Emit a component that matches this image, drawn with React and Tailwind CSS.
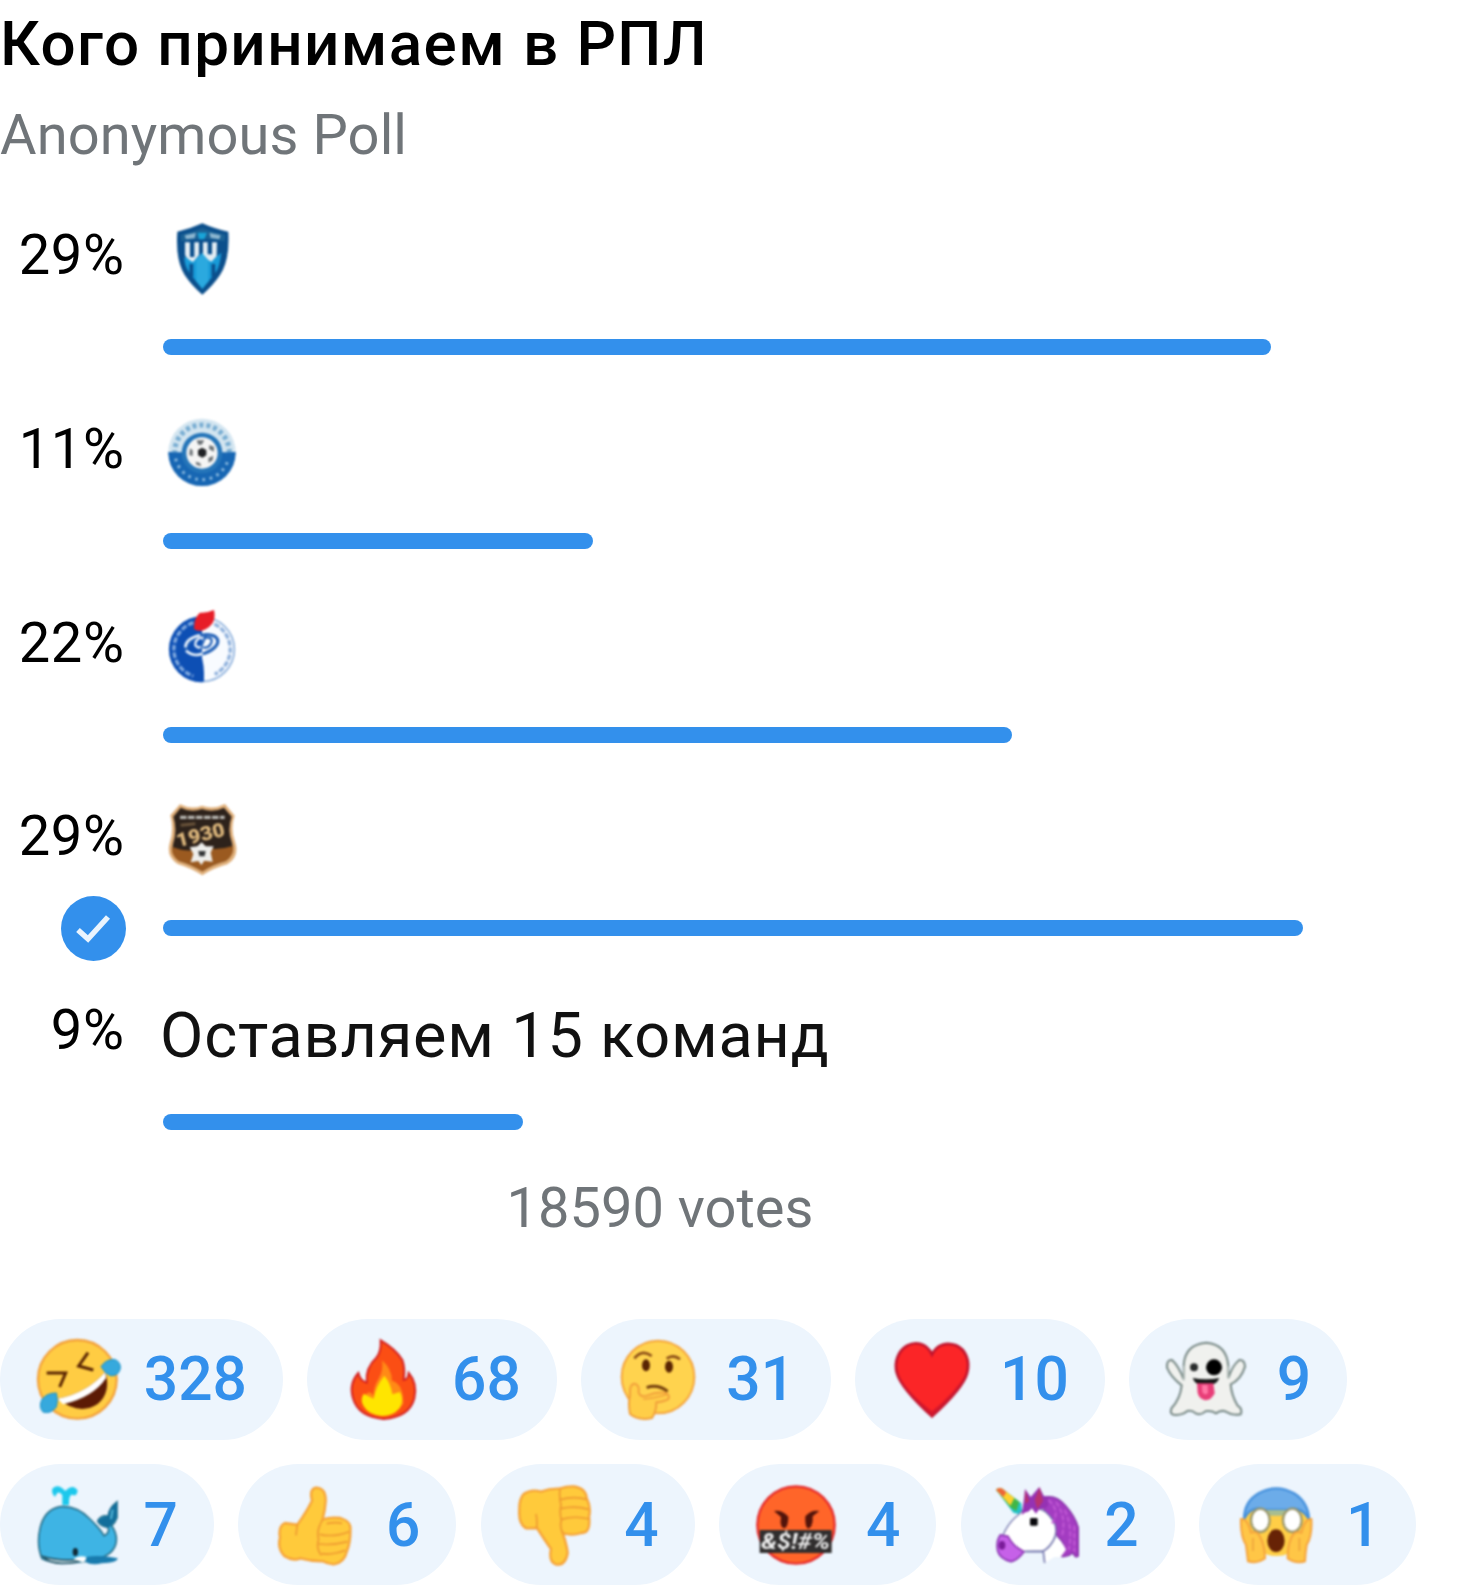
import React from 'react';

const BLUE = '#3390ec';

function Shield() {
  return (
    <g>
      <path d="M82 65 Q122 56 157 40 Q192 56 235 65 Q240 150 210 195 Q188 228 157 254 Q126 228 104 195 Q76 150 82 65Z" fill="#0b4f8c" />
      <path d="M92 74 Q125 68 157 54 Q190 68 226 74 L224 94 Q157 80 94 94Z" fill="#1b6194" />
      <path d="M104 76 L138 68 L134 85 L108 88Z M178 68 L212 76 L208 88 L182 84Z" fill="#8cb6d0" />
      <path d="M143 68 h28 l-8 20 h-16z" fill="#19a4d8" />
      <path d="M103 140 L130 152 L157 128 L184 152 L214 128 Q210 168 198 186 L157 238 L118 188 Q102 166 103 140Z" fill="#189bd8" />
      <path d="M124 162 V200 M190 162 V200" stroke="#0b4f8c" strokeWidth="11" />
      <path d="M105 97 h15 v44 h13 v-44 h14 v38 l-18 21 q-22 -12 -24 -22z" fill="#e3edf3" />
      <path d="M159 97 h14 v36 h13 v-36 h15 l-1 42 l-16 16 q-23 -10 -25 -22z" fill="#e3edf3" />
      <path d="M139 150 L157 130 L175 150 V214 L157 234 L139 214Z" fill="#2ba9df" />
    </g>
  );
}

function BallCrest() {
  return (
    <g>
      <circle cx="156" cy="141" r="101" fill="#d3e5f0" />
      <path d="M55 141 A101 101 0 0 0 257 141 Z" fill="#1766b3" />
      <circle cx="156" cy="141" r="82" fill="none" stroke="#78add2" strokeWidth="15" strokeDasharray="12 9" />
      <path d="M69 141 A87 87 0 0 0 243 141" fill="none" stroke="#1766b3" strokeWidth="27" />
      <path d="M77 160 A81 81 0 0 0 235 160" fill="none" stroke="#8dbbe0" strokeWidth="9" strokeDasharray="8 14" />
      <circle cx="156" cy="143" r="61" fill="#2575b9" />
      <circle cx="156" cy="143" r="47" fill="#f5f5f4" />
      <path d="M144 134 l12 -7 l13 7 v16 l-12 7 l-13 -7z" fill="#202225" />
      <path d="M140 105 h23 l-8 13 h-10z M178 119 l14 5 v15 l-15 -8z M175 158 l15 -7 l-2 14 l-12 7z M120 129 l8 6 v17 l-10 -3z M137 169 l13 4 l4 10 l-15 -5z" fill="#6d7377" />
    </g>
  );
}

function FlameCrest() {
  return (
    <g>
      <circle cx="156" cy="146" r="97" fill="#f8fbff" stroke="#8aaedb" strokeWidth="5" />
      <path d="M156 47 A99 99 0 0 0 156 245 Z" fill="#0d4fb4" />
      <path d="M130 66 A84 84 0 0 0 130 226" fill="none" stroke="#7fa8de" strokeWidth="10" strokeDasharray="17 6" />
      <path d="M193 70 A84 84 0 0 1 194 221" fill="none" stroke="#8fb1dc" strokeWidth="10" strokeDasharray="17 5" />
      <path d="M148 160 Q160 190 158 243" fill="none" stroke="#0d4fb4" strokeWidth="8" />
      <ellipse cx="156" cy="132" rx="49" ry="27" transform="rotate(-18 156 132)" fill="none" stroke="#2865b9" strokeWidth="10" />
      <path d="M106 140 Q108 112 150 104 M108 150 Q134 171 158 158" fill="none" stroke="#e8f1fb" strokeWidth="8" />
      <path d="M160 112 Q190 106 184 126 Q176 144 158 140 M168 104 L148 150" fill="none" stroke="#2865b9" strokeWidth="7" />
      <path d="M156 110 Q134 116 136 134 Q144 144 152 138" fill="none" stroke="#e8f1fb" strokeWidth="7" />
      <path d="M132 84 Q132 49 150 36 Q168 38 192 28 Q199 62 178 78 Q160 92 148 90 Q137 90 132 84Z" fill="#e71d27" />
    </g>
  );
}

function UralCrest() {
  return (
    <g>
      <path d="M90 28 Q124 45 156 32 Q190 45 225 27 L254 62 Q240 101 255 140 Q270 184 232 208 Q190 219 157 241 Q121 218 83 207 Q48 184 59 145 Q73 104 61 61Z" fill="#dfae78" />
      <path d="M92 38 Q124 54 156 42 Q190 54 222 38 L245 65 Q231 105 246 143 Q256 175 228 197 Q188 207 157 229 Q123 207 86 197 Q61 177 69 147 Q83 105 70 65Z" fill="#2d221b" />
      <path d="M68 156 Q120 177 157 157 Q204 168 248 153 Q254 180 228 197 Q188 207 157 229 Q123 207 86 197 Q60 179 68 156Z" fill="#9b5a20" />
      <path d="M90 67 H224" stroke="#b9b7b2" strokeWidth="10" strokeDasharray="20 4" />
      <text x="84" y="157" transform="rotate(-14 84 157)" fontSize="58" fontWeight="900" textLength="148" lengthAdjust="spacingAndGlyphs" fill="#ddb77c">
        1930
      </text>
      <path d="M92 91 L136 86" stroke="#69533a" strokeWidth="9" />
      <path d="M155 142 L167 154 L191 154 L182 173 L188 200 L163 197 L154 210 L145 198 L122 202 L130 177 L119 157 L142 154Z" fill="#eeeeeb" />
      <path d="M145 168 H167 L164 184 H148Z" fill="#343637" />
    </g>
  );
}

function Laugh() {
  return (
    <g>
      <circle cx="231" cy="209" r="118" fill="#ffcc43" stroke="#f3a13b" strokeWidth="7" />
      <path d="M139 190 L196 190 L178 232" fill="none" stroke="#5a2503" strokeWidth="9" />
      <path d="M263 129 L235 169 L279 181" fill="none" stroke="#5a2503" strokeWidth="9" />
      <path d="M172 267 Q260 250 315 186 Q333 248 292 283 Q237 319 172 267Z" fill="#5c1b05" />
      <path d="M172 267 Q260 250 315 186 L317 205 Q280 262 188 284Z" fill="#fff" />
      <path d="M302 171 Q315 150 341 149 Q361 155 360 176 Q355 200 330 198 Q316 193 302 171Z" fill="#36a9dd" stroke="#188fc4" strokeWidth="3" />
      <path d="M168 250 Q174 274 168 292 Q151 314 128 307 Q114 292 125 269 Q140 250 168 250Z" fill="#36a9dd" stroke="#188fc4" strokeWidth="3" />
    </g>
  );
}

function Fire() {
  return (
    <g>
      <path d="M1142 92 Q1187 118 1207 151 Q1216 175 1211 211 Q1224 210 1226 190 Q1253 221 1243 266 Q1229 322 1151 328 Q1075 322 1059 266 Q1046 222 1075 190 Q1080 213 1100 219 Q1096 174 1129 144 Q1144 126 1142 92Z" fill="#fb4e14" stroke="#d42424" strokeWidth="6" />
      <path d="M1146 152 Q1175 177 1176 213 Q1211 223 1210 282 Q1185 320 1145 318 Q1096 313 1090 278 Q1089 256 1106 248 Q1115 248 1121 259 Q1120 231 1136 207 Q1151 181 1146 152Z" fill="#ff8a16" />
      <path d="M1153 198 Q1172 220 1177 254 L1200 247 Q1213 272 1199 295 Q1180 319 1146 319 Q1107 317 1091 290 Q1079 271 1091 252 Q1105 260 1121 267 Q1127 230 1153 198Z" fill="#ffe500" />
    </g>
  );
}

function Thinking() {
  return (
    <g>
      <circle cx="295" cy="202" r="109" fill="#ffd34e" stroke="#f5a53c" strokeWidth="6" />
      <path d="M224 146 Q248 117 276 139 M321 147 Q341 132 361 149" fill="none" stroke="#8a4c16" strokeWidth="8" />
      <ellipse cx="259" cy="167" rx="12" ry="18" fill="#5a2503" />
      <ellipse cx="328" cy="171" rx="12" ry="18" fill="#5a2503" />
      <path d="M261 234 Q293 222 324 245" fill="none" stroke="#74400e" strokeWidth="9" />
      <path d="M211 313 Q205 283 211 257 Q208 223 225 222 Q241 227 237 249 Q243 264 262 258 Q290 246 316 249 Q334 257 325 269 Q312 276 290 278 Q290 307 277 325 Q236 334 211 313Z" fill="#ffce48" stroke="#f1a03b" strokeWidth="6" />
      <path d="M251 268 Q283 266 326 253" fill="none" stroke="#f1a03b" strokeWidth="4" />
    </g>
  );
}

function Heart() {
  return (
    <g>
      <path d="M1117 134 C1099 96 1064 96 1042 108 C1015 124 1002 158 1012 191 C1023 228 1073 280 1117 320 C1163 278 1212 228 1222 191 C1233 153 1217 119 1189 107 C1162 97 1132 103 1117 134Z" fill="#fb2527" stroke="#bf142e" strokeWidth="8" />
      <path d="M1014 191 Q1041 247 1117 305 Q1187 249 1220 191 Q1208 236 1117 318 Q1027 240 1014 191Z" fill="#d4182d" />
    </g>
  );
}

function Ghost() {
  return (
    <g>
      <path d="M193 209 Q178 169 158 151 Q141 150 143 174 Q155 203 187 227 Q183 267 157 295 Q148 316 170 316 Q192 315 204 304 Q218 300 229 311 Q244 319 258 305 Q276 302 290 311 Q308 298 324 308 Q341 319 364 314 Q371 298 355 288 Q336 256 334 224 Q365 210 377 171 Q376 150 360 151 Q340 166 327 205 V169 Q322 104 261 99 Q196 104 193 168Z" fill="#f0f1ee" stroke="#788986" strokeWidth="6" />
      <path d="M193 168 V213 M327 170 V208" stroke="#b7c1bd" strokeWidth="4" />
      <circle cx="224" cy="173" r="12" fill="#292c2c" />
      <circle cx="284" cy="173" r="24" fill="#000" />
      <path d="M220 205 Q260 213 300 205 Q292 223 279 224 H239 Q227 222 220 205Z" fill="#151616" />
      <path d="M233 221 H282 L286 251 Q276 272 258 272 Q239 267 235 250Z" fill="#e83e78" />
      <path d="M248 226 H265 L266 250 Q256 260 249 247Z" fill="#ff77a5" />
    </g>
  );
}

function Whale() {
  return (
    <g>
      <path d="M186 149 V119 Q174 100 164 124 Q151 113 157 98 Q174 82 195 106 Q218 83 232 105 Q228 123 218 118 Q205 113 206 149Z" fill="#1dc8ec" />
      <path d="M125 309 Q108 268 119 219 Q132 161 180 153 Q230 149 269 190 Q300 220 311 240 Q329 232 323 215 Q299 212 292 196 Q301 177 324 181 Q325 158 350 139 L350 186 Q344 202 334 210 Q356 242 344 272 Q332 299 297 307 Q253 323 184 321 Q144 321 125 309Z" fill="#3eb4e4" stroke="#28708b" strokeWidth="5" />
      <path d="M292 196 Q305 182 324 181 Q323 160 350 139 V185 Q336 209 325 216 Q303 212 292 196Z" fill="#126e9b" />
      <path d="M128 303 Q177 318 244 311 Q232 323 184 323 Q145 322 128 303Z" fill="#dcecf0" stroke="#25576a" strokeWidth="5" />
      <path d="M219 311 Q240 294 266 308 L248 320Z" fill="#fff" />
      <path d="M258 304 Q295 296 352 308 Q351 321 304 323 Q275 330 255 319Z" fill="#187bae" />
      <ellipse cx="225" cy="289" rx="8" ry="12" fill="#102a36" />
      <path d="M337 162 L332 190" stroke="#55b7d9" strokeWidth="6" />
    </g>
  );
}

function ThumbUp() {
  return (
    <g>
      <path d="M893 207 Q922 166 937 135 Q928 101 948 96 Q979 96 978 136 Q977 160 969 191 Q994 183 1022 187 Q1056 197 1052 222 Q1053 258 1042 286 Q1034 322 1002 326 Q983 325 970 317 Q935 317 902 308 Q879 317 855 302 Q832 278 841 246 Q835 211 856 202Z" fill="#ffca3b" stroke="#f6a338" strokeWidth="7" />
      <path d="M893 205 L889 239 M969 192 Q949 224 957 251 Q948 278 965 299 M960 236 Q1002 246 1048 228 M957 265 Q997 270 1044 258 M966 294 Q1000 299 1037 284 M981 204 Q1007 198 1027 203" fill="none" stroke="#ef9a31" strokeWidth="5" />
    </g>
  );
}

function ThumbDown() {
  return (
    <g>
      <path d="M198 217 Q219 250 240 280 Q232 319 256 327 Q284 329 290 292 Q288 270 275 232 Q302 242 331 232 Q360 233 354 183 Q361 156 347 126 Q344 97 308 92 Q289 91 265 99 Q236 98 210 108 Q181 99 158 115 Q144 130 145 164 Q142 206 166 218Z" fill="#ffca3b" stroke="#f6a338" strokeWidth="7" />
      <path d="M197 218 Q199 191 195 175 M267 100 Q264 126 270 148 Q265 169 271 194 Q265 216 276 232 M268 132 Q308 120 347 131 M270 159 Q310 149 353 161 M272 191 Q311 179 354 190" fill="none" stroke="#ef9a31" strokeWidth="5" />
    </g>
  );
}

function Cursing() {
  return (
    <g>
      <circle cx="975" cy="208" r="116" fill="#ff6529" stroke="#e52c2d" strokeWidth="7" />
      <path d="M909 166 Q932 161 952 183 Q952 214 940 218 Q925 216 930 184Z M1045 166 Q1020 161 1003 182 Q1001 215 1012 219 Q1027 213 1025 182Z" fill="#52140b" />
      <path d="M866 223 H1082 V292 H866Z" fill="#302e2e" />
      <text x="870" y="281" fontSize="66" fontWeight="700" fontStyle="italic" textLength="207" lengthAdjust="spacingAndGlyphs" fill="#ededed">
        {'&$!#%'}
      </text>
    </g>
  );
}

function Unicorn() {
  return (
    <g>
      <path d="M276 125 Q315 115 344 150 Q373 183 382 216 V301 Q373 309 366 292 Q347 307 328 301 Q346 282 333 257 L282 198Z" fill="#a33cc1" stroke="#8230a4" strokeWidth="4" />
      <path d="M135 102 Q145 93 155 100 L211 143 L214 178 L187 171Z" fill="#22c3c8" />
      <path d="M135 102 Q145 93 155 100 L205 138 L196 166 L178 155Z" fill="#42b646" />
      <path d="M135 102 Q145 93 155 100 L190 127 L178 150Z" fill="#ffd12d" />
      <path d="M135 102 Q145 93 155 100 L166 109 L157 124Z" fill="#ed6637" />
      <path d="M203 177 Q230 140 283 168 Q322 202 313 237 Q306 277 277 286 L220 287 Q185 301 151 253 Q167 203 203 177Z" fill="#fff" stroke="#777aaf" strokeWidth="4" />
      <path d="M277 285 Q303 273 310 247 Q330 249 345 282 L329 304 H310 L280 323Z" fill="#fff" />
      <path d="M223 288 H273 Q299 276 313 242 M277 288 L281 322" fill="none" stroke="#777aaf" strokeWidth="5" />
      <path d="M148 238 Q134 257 140 286 Q146 309 180 318 Q199 314 219 288 Q188 274 171 242Z" fill="#c661e8" stroke="#8b36b2" strokeWidth="5" />
      <ellipse cx="153" cy="269" rx="10" ry="13" fill="#7a1c9a" />
      <path d="M212 178 L218 137 L222 100 L239 124 L265 94 L278 120 Q300 123 291 151 Q280 163 265 160 L255 174 L242 157 Q236 169 223 170Z" fill="#9532b3" />
      <path d="M222 102 L235 137 L222 144Z M266 95 L276 136 L259 160 L251 132Z" fill="#b73270" />
      <path d="M292 133 Q330 166 303 203 M315 139 Q347 183 333 241 M341 163 Q367 217 353 283 M370 210 V289" fill="none" stroke="#c058d4" strokeWidth="6" strokeDasharray="16 6" />
      <rect x="237" y="187" width="23" height="23" rx="4" fill="#08080c" />
    </g>
  );
}

function Scream() {
  return (
    <g>
      <circle cx="976" cy="201" r="100" fill="#ffce46" />
      <path d="M879 190 Q880 137 923 113 Q976 83 1029 113 Q1071 139 1074 190 Q1049 148 1010 163 H941 Q903 146 879 190Z" fill="#6cace9" stroke="#4590dc" strokeWidth="7" />
      <path d="M941 163 H1010 L993 180 H959Z" fill="#a7bd91" />
      <ellipse cx="928" cy="194" rx="28" ry="35" fill="#fff" stroke="#9b986d" strokeWidth="7" />
      <ellipse cx="1024" cy="194" rx="28" ry="35" fill="#fff" stroke="#9b986d" strokeWidth="7" />
      <ellipse cx="975" cy="255" rx="26" ry="34" fill="#672306" />
      <path d="M870 190 Q890 187 900 231 Q922 223 930 249 Q941 270 942 308 Q920 325 891 317 Q888 291 885 268 Q868 241 870 190Z" fill="#ffc646" stroke="#f5a33d" strokeWidth="6" />
      <path d="M1081 190 Q1062 187 1051 231 Q1028 223 1020 249 Q1010 270 1010 308 Q1034 325 1062 317 Q1063 291 1067 268 Q1084 241 1081 190Z" fill="#ffc646" stroke="#f5a33d" strokeWidth="6" />
      <path d="M906 247 V286 M1045 247 V286" stroke="#efa53c" strokeWidth="5" />
    </g>
  );
}

const options = [
  { percent: 29, width: 1108, Crest: Shield, box: '0 0 330 270' },
  { percent: 11, width: 430, Crest: BallCrest, box: '0 -4 330 270' },
  { percent: 22, width: 849, Crest: FlameCrest, box: '0 -8 330 270' },
  { percent: 29, width: 1140, Crest: UralCrest, box: '0 -12 330 270', chosen: true },
  { percent: 9, width: 360, label: 'Оставляем 15 команд' },
];

const reactionRows = [
  [
    { Emoji: Laugh, x: 98, count: 328, width: 283 },
    { Emoji: Fire, x: 1020, count: 68, width: 249.5 },
    { Emoji: Thinking, x: 163, count: 31, width: 250 },
    { Emoji: Heart, x: 985, count: 10, width: 249.5 },
    { Emoji: Ghost, x: 128, count: 9, width: 218 },
  ],
  [
    { Emoji: Whale, x: 98, count: 7, width: 214 },
    { Emoji: ThumbUp, x: 814, count: 6, width: 218 },
    { Emoji: ThumbDown, x: 129, count: 4, width: 214 },
    { Emoji: Cursing, x: 843, count: 4, width: 217.5 },
    { Emoji: Unicorn, x: 129, count: 2, width: 214 },
    { Emoji: Scream, x: 843, count: 1, width: 217.5 },
  ],
];

function PollOption({ percent, width, Crest, box, label, chosen }) {
  return (
    <div className="h-[193.75px]">
      <div className="flex h-[129px] items-start">
        <div className="w-[124.5px] text-right text-[56px] leading-[91px] tracking-[0.6px]">{percent}%</div>
        {Crest && (
          <svg viewBox={box} className="ml-[25.5px] h-[90px] w-[110px] blur-[1px]">
            <Crest />
          </svg>
        )}
        {label && (
          <div className="ml-[35.5px] text-[63px] leading-[101px] tracking-[0.8px] whitespace-nowrap text-[#111]">{label}</div>
        )}
      </div>
      <div className="flex h-4 items-center">
        <div className="flex w-[126px] shrink-0 justify-end">
          {chosen && (
            <svg viewBox="0 0 65 65" className="h-[65px] w-[65px]">
              <circle cx="32.5" cy="32.5" r="32.5" fill={BLUE} />
              <path d="M17 34 L27 43 L47 21" fill="none" stroke="#eaf4fe" strokeWidth="5.5" />
            </svg>
          )}
        </div>
        <div className="ml-[37px] h-4 rounded-full bg-[#3390ec]" style={{ width }} />
      </div>
    </div>
  );
}

function Reaction({ Emoji, x, count, width }) {
  return (
    <div
      className="flex h-[121px] shrink-0 items-center justify-between rounded-full bg-[#edf5fd] pr-[36px] pl-[33px]"
      style={{ width }}
    >
      <svg viewBox={`${x} 76 264 264`} className="h-[88px] w-[88px] shrink-0 blur-[0.8px]">
        <Emoji />
      </svg>
      <span className="pt-[3px] text-[60.5px] font-medium text-[#3390ec]">{count}</span>
    </div>
  );
}

export default function App() {
  return (
    <div className="h-[1585px] w-[1460px] overflow-hidden bg-white font-['Roboto',sans-serif] text-black">
      <h1 className="text-[62px] leading-[88px] font-medium tracking-[1.4px] whitespace-nowrap">Кого принимаем в РПЛ</h1>
      <p className="text-[56px] leading-[94px] tracking-[0.1px] text-[#707579]">Anonymous Poll</p>

      <div className="mt-7">
        {options.map((option, i) => (
          <PollOption key={i} {...option} />
        ))}
      </div>

      <p className="w-[1320px] text-center text-[56px] leading-[58px] text-[#707579]">18590 votes</p>

      <div className="mt-[82px] flex flex-col gap-[24.5px]">
        {reactionRows.map((row, i) => (
          <div key={i} className="flex gap-[24.3px]">
            {row.map((reaction, j) => (
              <Reaction key={j} {...reaction} />
            ))}
          </div>
        ))}
      </div>
    </div>
  );
}
